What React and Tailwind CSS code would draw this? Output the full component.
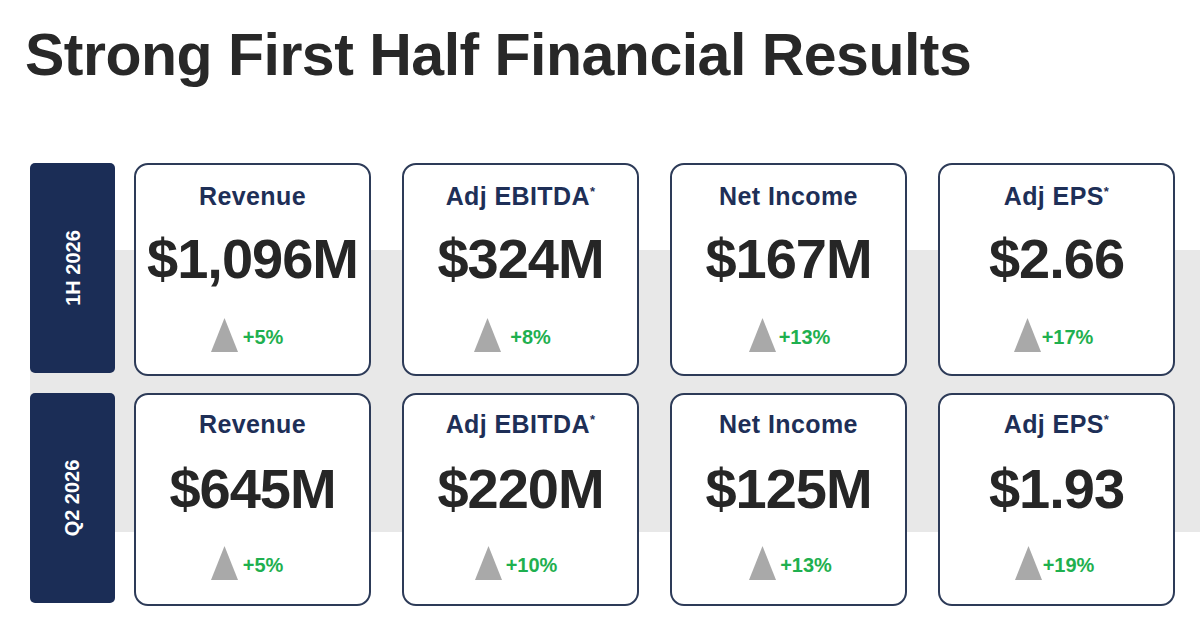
import React from "react";

const rows = [
  {
    label: "1H 2026",
    lt: "mt-[19px]",
    vt: "mt-[22px]",
    tt: "mt-[31px]",
    cards: [
      { title: "Revenue", star: false, value: "$1,096M", pct: "+5%", g: "gap-[5px] mr-[11px]" },
      { title: "Adj EBITDA", star: true, value: "$324M", pct: "+8%", g: "gap-[9px] mr-[16px]" },
      { title: "Net Income", star: false, value: "$167M", pct: "+13%", g: "gap-[3px] ml-[2px]" },
      { title: "Adj EPS", star: true, value: "$2.66", pct: "+17%", g: "gap-[1px] mr-[6px]" },
    ],
  },
  {
    label: "Q2 2026",
    lt: "mt-[17px]",
    vt: "mt-[24px]",
    tt: "mt-[29px]",
    cards: [
      { title: "Revenue", star: false, value: "$645M", pct: "+5%", g: "gap-[5px] mr-[11px]" },
      { title: "Adj EBITDA", star: true, value: "$220M", pct: "+10%", g: "gap-[4px] mr-[9px]" },
      { title: "Net Income", star: false, value: "$125M", pct: "+13%", g: "gap-[4px] ml-[4px]" },
      { title: "Adj EPS", star: true, value: "$1.93", pct: "+19%", g: "gap-[1px] mr-[4px]" },
    ],
  },
];

function Triangle() {
  return (
    <svg width="27" height="34" viewBox="0 0 27 34" className="shrink-0">
      <polygon points="13.5,0 27,34 0,34" fill="#a9a9a9" />
    </svg>
  );
}

function Card({ c, r }) {
  return (
    <div className="w-[237px] h-[213px] rounded-[14px] border-2 border-[#2d3b58] bg-white flex flex-col items-center">
      <div className={r.lt + " h-[25px] leading-[25px] text-[25px] tracking-[0.4px] font-bold text-[#1e2f57] whitespace-nowrap"}>
        {c.title}
        {c.star && <span className="relative -top-[9px] text-[13px]">*</span>}
      </div>
      <div className={r.vt + " h-[56px] leading-[56px] text-[56px] tracking-[-1px] font-bold text-[#262626] whitespace-nowrap"}>
        {c.value}
      </div>
      <div className={r.tt + " flex items-end " + c.g}>
        <Triangle />
        <span className="mb-[5px] text-[20px] leading-[20px] font-bold text-[#1fb04f]">{c.pct}</span>
      </div>
    </div>
  );
}

export default function App() {
  return (
    <div
      className="w-[1200px] h-[625px] bg-white overflow-hidden"
      style={{ fontFamily: '"Liberation Sans", Arial, sans-serif' }}
    >
      <h1 className="pt-[25px] pl-[25px] text-[59px] leading-[60px] tracking-[-0.5px] font-bold text-[#282828] whitespace-nowrap">
        Strong First Half Financial Results
      </h1>
      <div className="mt-[78px] ml-[30px] flex flex-col gap-[17px] bg-[linear-gradient(to_bottom,transparent_87px,#e8e8e8_87px,#e8e8e8_369px,transparent_369px)]">
        {rows.map((r, i) => (
          <div key={i} className="flex items-start">
            <div className="w-[85px] h-[210px] rounded-[5px] bg-[#1b2d56] flex items-center justify-center">
              <span className="-rotate-90 whitespace-nowrap text-white font-bold text-[20px] leading-[20px]">
                {r.label}
              </span>
            </div>
            <div className="ml-[19px] flex gap-[31px]">
              {r.cards.map((c, j) => (
                <Card key={j} c={c} r={r} />
              ))}
            </div>
          </div>
        ))}
      </div>
    </div>
  );
}
